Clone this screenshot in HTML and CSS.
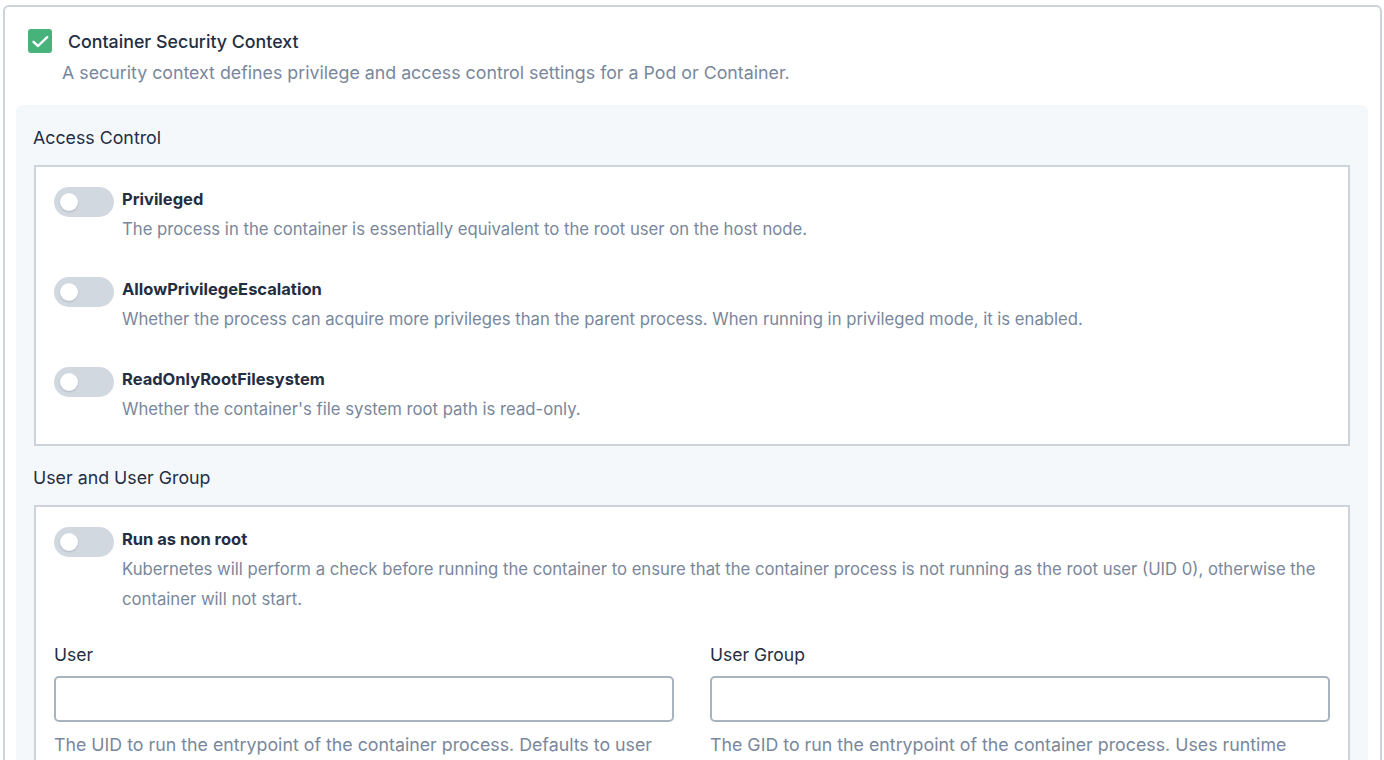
FILE: index.html
```html
<!DOCTYPE html>
<html lang="en">
<head>
<meta charset="utf-8">
<title>Container Security Context</title>
<link rel="stylesheet" href="styles.css">
</head>
<body>
<div class="card">
  <div class="header">
    <div class="header-row">
      <span class="checkbox">
        <svg width="24" height="24" viewBox="0 0 24 24"><path d="M5.5 12.8 L10 17 L19.2 8.2" fill="none" stroke="#fff" stroke-width="2.4" stroke-linecap="round" stroke-linejoin="round"/></svg>
      </span>
      <span class="title">Container Security Context</span>
    </div>
    <div class="header-desc">A security context defines privilege and access control settings for a Pod or Container.</div>
  </div>
  <div class="section">
    <div class="group-title">Access Control</div>
    <div class="box">
      <div class="item">
        <span class="toggle"><span class="knob"></span></span>
        <div class="item-text">
          <div class="item-label">Privileged</div>
          <div class="item-desc">The process in the container is essentially equivalent to the root user on the host node.</div>
        </div>
      </div>
      <div class="item">
        <span class="toggle"><span class="knob"></span></span>
        <div class="item-text">
          <div class="item-label">AllowPrivilegeEscalation</div>
          <div class="item-desc">Whether the process can acquire more privileges than the parent process. When running in privileged mode, it is enabled.</div>
        </div>
      </div>
      <div class="item">
        <span class="toggle"><span class="knob"></span></span>
        <div class="item-text">
          <div class="item-label">ReadOnlyRootFilesystem</div>
          <div class="item-desc">Whether the container's file system root path is read-only.</div>
        </div>
      </div>
    </div>
    <div class="group-title spaced">User and User Group</div>
    <div class="box">
      <div class="item">
        <span class="toggle"><span class="knob"></span></span>
        <div class="item-text">
          <div class="item-label">Run as non root</div>
          <div class="item-desc">Kubernetes will perform a check before running the container to ensure that the container process is not running as the root user (UID 0), otherwise the container will not start.</div>
        </div>
      </div>
      <div class="fields">
        <div class="field">
          <div class="field-label">User</div>
          <input class="input" type="text">
          <div class="field-help">The UID to run the entrypoint of the container process. Defaults to user specified in image metadata if unspecified.</div>
        </div>
        <div class="field">
          <div class="field-label">User Group</div>
          <input class="input" type="text">
          <div class="field-help">The GID to run the entrypoint of the container process. Uses runtime default if unset.</div>
        </div>
      </div>
    </div>
  </div>
</div>
</body>
</html>
```
FILE: styles.css
```css
* { box-sizing: border-box; }
html, body { margin: 0; padding: 0; background: #fff; }
body {
  padding: 5px 2px 0 3px;
  font-family: Inter, "Noto Sans", "Liberation Sans", sans-serif;
  color: #242e42;
}
.card {
  border: 2px solid #cdd3db;
  border-radius: 6px;
  padding: 0 12px 12px 11px;
  background: #fff;
}
.header { padding: 22px 12px 0 12px; }
.header-row { display: flex; align-items: center; height: 24px; }
.checkbox {
  width: 24px; height: 24px;
  border-radius: 3px;
  background: #47b37a;
  display: block;
  flex: none;
}
.checkbox svg { display: block; }
.title { margin-left: 16px; margin-top: 2px; font-size: 17.8px; line-height: 24px; color: #242e42; font-weight: 500; }
.header-desc {
  margin: 5px 0 0 34px;
  font-size: 17.8px; line-height: 30px; color: #79879c;
}
.section {
  margin-top: 17px;
  background: #f5f8fb;
  border-radius: 6px;
  padding: 21px 18px 20px 17px;
}
.group-title { font-size: 17.8px; line-height: 24px; color: #242e42; font-weight: 400; margin-bottom: 15px; }
.group-title.spaced { margin-top: 20px; }
.box {
  margin-left: 1px;
  background: #fff;
  border: 2px solid #cdd3db;
  padding: 20px 18px;
}
.item { display: flex; align-items: flex-start; }
.item + .item { margin-top: 33px; }
.toggle {
  flex: none;
  width: 60px; height: 30px;
  border-radius: 15px;
  background: #d1d8e0;
  position: relative;
  margin-right: 8px;
}
.knob {
  position: absolute;
  left: 6px; top: 6px;
  width: 18px; height: 18px;
  border-radius: 50%;
  background: #fff;
  box-shadow: 0 1px 2px rgba(36, 46, 66, 0.2);
}
.item-label { font-size: 16.5px; line-height: 24px; font-weight: 700; color: #242e42; }
.item-desc { margin-top: 3px; font-size: 16.7px; line-height: 30px; color: #79879c; }
.fields { display: flex; gap: 36px; margin-top: 29px; }
.field { flex: 1; min-width: 0; }
.field-label { font-size: 17.5px; line-height: 24px; color: #242e42; }
.input {
  display: block;
  width: 100%;
  height: 46px;
  margin-top: 9px;
  border: 2px solid #a9b3c0;
  border-radius: 5px;
  background: #fff;
  font: inherit;
  outline: none;
}
.field-help { margin-top: 8px; font-size: 17.8px; line-height: 30px; color: #79879c; }
```
